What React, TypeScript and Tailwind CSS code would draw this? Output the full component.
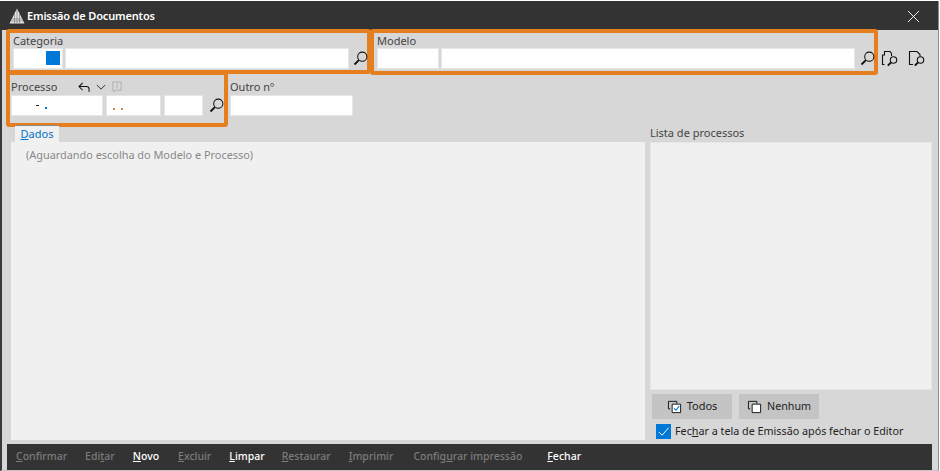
import React from "react";

const font = "font-['Noto_Sans','Open_Sans',sans-serif]";

function Lens({ className = "" }: { className?: string }) {
  return (
    <svg viewBox="0 0 16 16" className={`w-[15px] h-[15px] shrink-0 ${className}`} fill="none" stroke="#111">
      <circle cx="9.9" cy="6.1" r="4.9" strokeWidth="1.1" />
      <path d="M6.3 9.7 L1.6 14.4" strokeWidth="2" />
    </svg>
  );
}

function Input({ className = "", children }: { className?: string; children?: React.ReactNode }) {
  return <div className={`relative h-[21px] bg-white border border-[#e6e6e6] shrink-0 ${className}`}>{children}</div>;
}

function Label({ children, className = "" }: { children: React.ReactNode; className?: string }) {
  return <div className={`text-[11px] leading-[14px] text-[#444] ${className}`}>{children}</div>;
}

function DocLens({ corner }: { corner?: boolean }) {
  return (
    <svg viewBox="0 0 18 18" className="w-[18px] h-[18px]" fill="none" stroke="#111">
      {corner ? (
        <path d="M3.5 14.5 H1.5 V5 H3.5 V1.5 H9 L10.5 3.5 V6" strokeWidth="1.1" />
      ) : (
        <path d="M5 14.5 H1.5 V1.5 H9 L12 4.5 V6.5" strokeWidth="1.1" />
      )}
      <circle cx="12.5" cy="10" r="3.2" strokeWidth="1.1" />
      <path d="M10 12.5 L6.8 15.7" strokeWidth="1.8" />
    </svg>
  );
}

function Action({ k, rest, pre = "", on, className = "" }: { k: string; rest: string; pre?: string; on?: boolean; className?: string }) {
  return (
    <span className={`text-[10.5px] font-medium whitespace-nowrap ${on ? "text-white" : "text-[#7c7c7c]"} ${className}`}>
      {pre}
      <span className="underline">{k}</span>
      {rest}
    </span>
  );
}

export default function App() {
  return (
    <div className={`w-[940px] h-[471px] bg-white overflow-hidden ${font}`}>
      <div className="mt-px w-[939px] h-[470px] flex flex-col bg-[#d7d7d7] border-l-2 border-r border-l-[#3a3a3a] border-r-[#8c8c8c] border-b border-b-[#c4c4c4]">
        <div className="h-[29px] shrink-0 -ml-0.5 bg-[#333333] flex items-center pl-[9px] pr-[18px] pt-px">
          <svg viewBox="0 0 16 16" className="w-[16px] h-[16px] mr-[2px]" fill="#e4e4e4">
            <path d="M8 0.5 L15.5 15.5 H0.5 Z" />
            <path d="M8 1 V15 M5.5 6 V15 M10.5 6 V15 M3 11 H13 M2 13 H14" stroke="#555" strokeWidth="0.5" />
          </svg>
          <span className="text-[11px] font-semibold text-white tracking-[-0.15px]">Emissão de Documentos</span>
          <svg viewBox="0 0 14 14" className="w-[13px] h-[13px] ml-auto" stroke="#fff" strokeWidth="1">
            <path d="M1 1 L13 13 M13 1 L1 13" />
          </svg>
        </div>

        <div className="flex pl-1 -mt-px h-[46px] shrink-0">
          <div className="w-[365px] h-[45px] border-4 border-[#e57e1f] rounded-[3px] pl-[3px] pt-[1px]">
            <Label>Categoria</Label>
            <div className="flex items-center">
              <Input className="w-[50px]">
                <div className="absolute left-[32px] top-[2px] w-[14px] h-[14px] bg-[#0078d7]" />
              </Input>
              <Input className="w-[284px] ml-[2px]" />
              <Lens className="ml-[4px]" />
            </div>
          </div>
          <div className="w-[508px] h-[46px] -ml-px border-4 border-[#e57e1f] rounded-[3px] pl-[3px] pt-[1px]">
            <Label>Modelo</Label>
            <div className="flex items-center">
              <Input className="w-[62px]" />
              <Input className="w-[414px] ml-[2px]" />
              <Lens className="ml-[5px]" />
            </div>
          </div>
          <div className="flex items-center gap-[9px] pl-[3px] pt-[14px]">
            <DocLens corner />
            <DocLens />
          </div>
        </div>

        <div className="flex pl-1 -mt-[4px] h-[57px] shrink-0">
          <div className="w-[222px] h-[56px] border-4 border-[#e57e1f] rounded-[3px] pl-[1px] pt-[5px]">
            <div className="flex items-center h-[14px]">
              <Label className="w-[67px] text-[11.2px]">Processo</Label>
              <svg viewBox="0 0 14 12" className="w-[13px] h-[11px]" fill="none" stroke="#111" strokeWidth="1.1">
                <path d="M5 1 L1 5 L5 9 M1 5 H9 Q12 5 12 8 V11" />
              </svg>
              <svg viewBox="0 0 12 8" className="w-[10px] h-[7px] ml-[5px]" fill="none" stroke="#111">
                <path d="M1 1 L6 6 L11 1" />
              </svg>
              <svg viewBox="0 0 12 14" className="w-[10px] h-[12px] ml-[6px]" fill="none" stroke="#aaa">
                <path d="M1 1 H11 V11 H4 L2 13 V11 H1 Z M6 3 V9" />
              </svg>
            </div>
            <div className="flex items-center mt-[1px]">
              <Input className="w-[92px]">
                <span className="absolute left-[24px] top-[9px] w-[3px] h-px bg-[#222]" />
                <span className="absolute left-[33px] top-[11px] w-[2px] h-[2px] bg-[#0078d7]" />
              </Input>
              <Input className="w-[55px] ml-[3px]">
                <span className="absolute left-[6px] top-[12px] w-[2px] h-[2px] bg-[#c98a50]" />
                <span className="absolute left-[14px] top-[12px] w-[2px] h-[2px] bg-[#c98a50]" />
              </Input>
              <Input className="w-[39px] ml-[3px]" />
              <Lens className="ml-[6px]" />
            </div>
          </div>
          <div className="ml-[2px] pt-[9px]">
            <Label className="text-[11.2px]">Outro nº</Label>
            <Input className="w-[123px] mt-[1px]" />
          </div>
        </div>

        <div className="flex-1 min-h-0 flex pl-[9px] -mt-[3px]">
          <div className="w-[634px] flex flex-col">
            <div className="ml-[4px] w-[44px] h-[17px] bg-[#f0f0f0] border-t border-[#8a8a8a] text-center text-[11px] leading-[15px] text-[#0072c6]">
              <span className="underline">D</span>ados
            </div>
            <div className="h-[298px] bg-[#f0f0f0] pl-[15px] pt-[5px] text-[10.9px] leading-[15px] text-[#888]">
              (Aguardando escolha do Modelo e Processo)
            </div>
          </div>
          <div className="w-[282px] ml-[5px] flex flex-col">
            <Label className="h-[17px] pt-px">Lista de processos</Label>
            <div className="h-[248px] bg-[#f0f0f0] border border-[#e6e6e6]" />
            <div className="flex gap-[7px] mt-[4px] pl-[2px]">
              <button className="w-[80px] h-[25px] bg-[#c4c4c4] flex items-center justify-center gap-[5px] text-[11px] text-[#222]">
                <svg viewBox="0 0 16 16" className="w-[15px] h-[15px]" fill="none" stroke="#111">
                  <path d="M3.5 10.5 H1.5 V2.5 H10.5 V5" />
                  <path d="M5.5 5.5 H14.5 V14.5 H5.5 Z" fill="#fff" />
                  <path d="M7.5 10 L9.5 12 L13 7.5" stroke="#0078d7" strokeWidth="1.2" />
                </svg>
                Todos
              </button>
              <button className="w-[80px] h-[25px] bg-[#c4c4c4] flex items-center justify-center gap-[5px] text-[10.7px] text-[#222]">
                <svg viewBox="0 0 16 16" className="w-[15px] h-[15px]" fill="none" stroke="#111">
                  <path d="M3.5 10.5 H1.5 V2.5 H10.5 V5" />
                  <path d="M5.5 5.5 H14.5 V14.5 H5.5 Z" fill="#fff" />
                </svg>
                Nenhum
              </button>
            </div>
            <div className="flex items-center mt-[4px] pl-[6px]">
              <div className="w-[15px] h-[15px] bg-[#0078d7] flex items-center justify-center">
                <svg viewBox="0 0 14 14" className="w-[13px] h-[13px]" fill="none" stroke="#fff" strokeWidth="1">
                  <path d="M2 7.5 L5.5 11 L12.5 3" />
                </svg>
              </div>
              <span className="ml-[4px] text-[10.75px] text-[#222] whitespace-nowrap">
                Fec<span className="underline">h</span>ar a tela de Emissão após fechar o Editor
              </span>
            </div>
          </div>
        </div>

        <div className="h-[26px] shrink-0 ml-[5px] mr-[6px] bg-[#333333] flex items-center pl-[9px]">
          <Action k="C" rest="onfirmar" />
          <Action k="t" pre="Edi" rest="ar" className="ml-[18px]" />
          <Action k="N" rest="ovo" on className="ml-[18px]" />
          <Action k="E" rest="xcluir" className="ml-[19px]" />
          <Action k="L" rest="impar" on className="ml-[18px]" />
          <Action k="R" rest="estaurar" className="ml-[17px]" />
          <Action k="I" rest="mprimir" className="ml-[18px]" />
          <Action k="u" pre="Config" rest="rar impressão" className="ml-[20px]" />
          <Action k="F" rest="echar" on className="ml-[25px]" />
        </div>
      </div>
    </div>
  );
}
